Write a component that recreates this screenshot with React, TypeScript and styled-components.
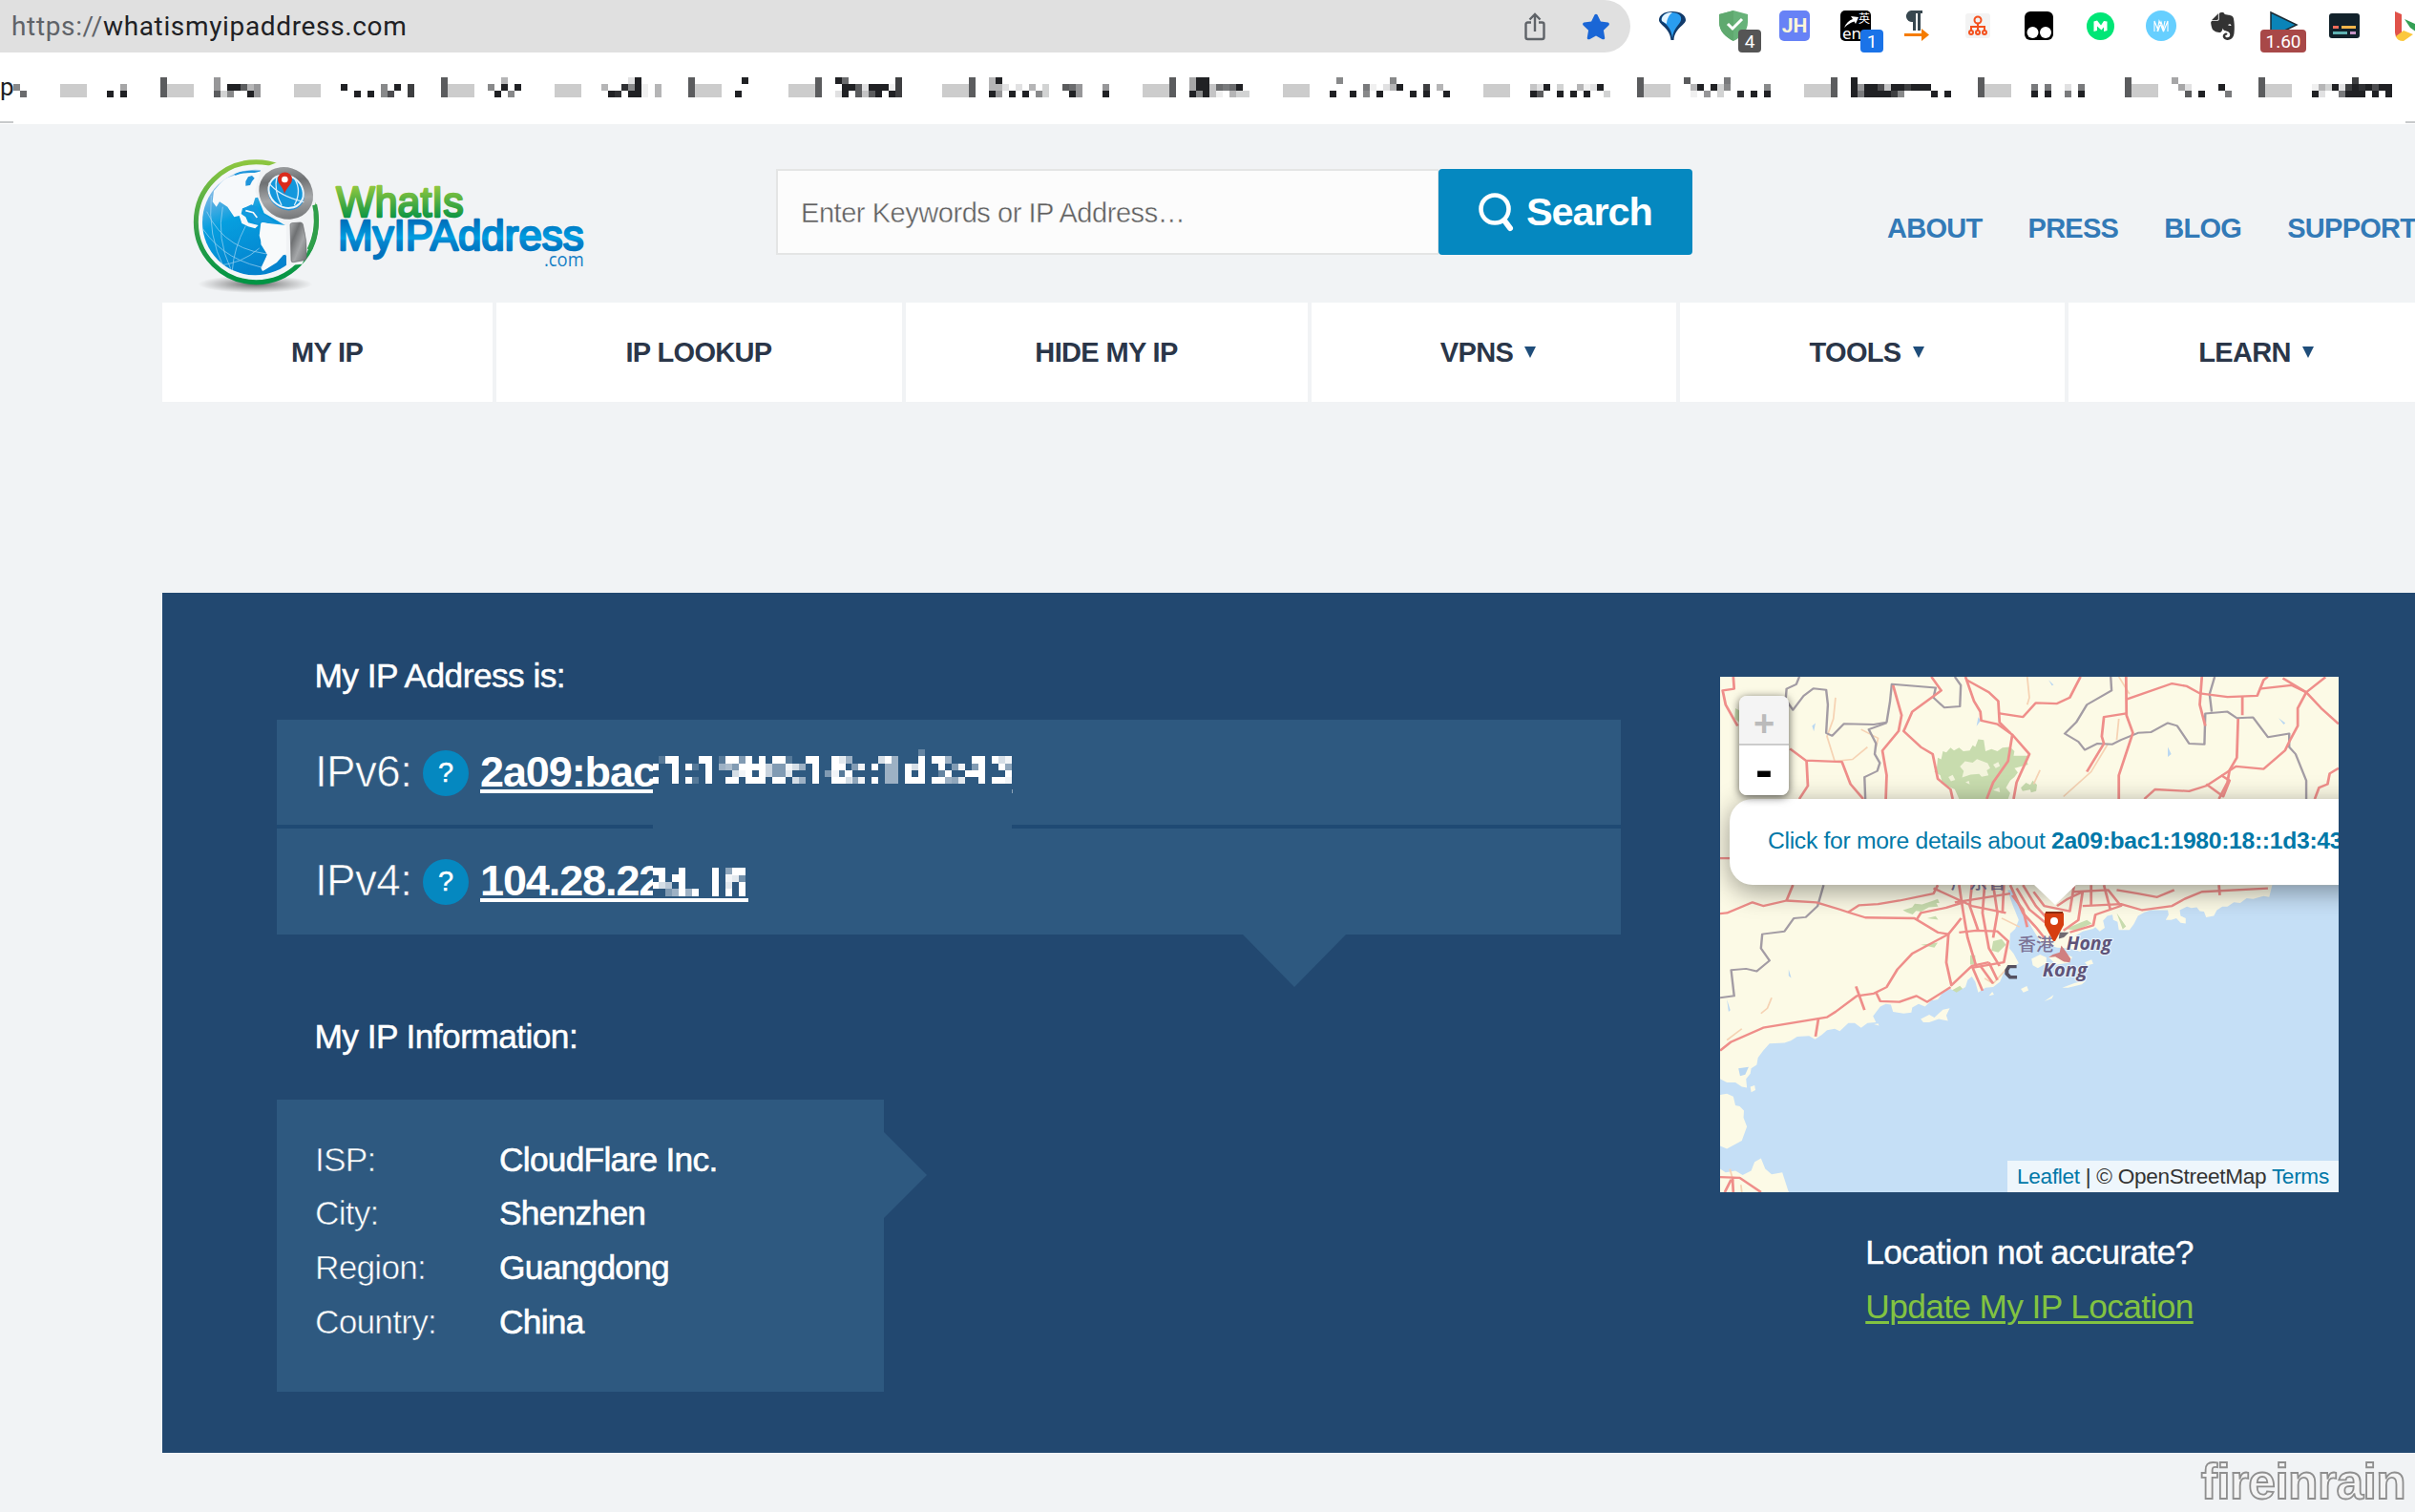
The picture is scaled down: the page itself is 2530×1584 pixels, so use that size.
import React from "react";
import styled, { createGlobalStyle } from "styled-components";
import { FaEvernote, FaStar } from "react-icons/fa";

const GlobalStyle = createGlobalStyle`
  *, *::before, *::after { box-sizing: border-box; }
  html, body { margin: 0; padding: 0; }
  body {
    width: 2530px;
    height: 1584px;
    overflow: hidden;
    background: #f1f3f5;
    font-family: "Liberation Sans", Arial, "Noto Sans CJK SC", sans-serif;
  }
`;

const Page = styled.div`
  position: relative;
  width: 2530px;
  height: 1584px;
  overflow: hidden;
`;

/* ---------- browser chrome ---------- */

const Toolbar = styled.div`
  display: flex;
  height: 55px;
  background: #fff;
`;

const Omnibox = styled.div`
  display: flex;
  flex: none;
  align-items: center;
  width: 1708px;
  height: 55px;
  padding: 0 4px 0 12px;
  background: #e0e0e0;
  border-radius: 0 28px 28px 0;
`;

const Url = styled.span`
  flex: 1;
  font: 400 28px/55px Roboto, "Noto Sans", sans-serif;
  letter-spacing: 0.65px;
  color: #202124;
`;

const Scheme = styled.span`
  color: #5f6368;
`;

const OmniIcon = styled.span`
  display: flex;
  justify-content: center;
  width: 64px;
  color: #1a66d6;
`;

const Extensions = styled.div`
  display: flex;
  flex: none;
  margin-left: 12px;
`;

const ExtSlot = styled.div`
  position: relative;
  display: flex;
  flex: none;
  align-items: center;
  justify-content: center;
  width: 64px;
  height: 54px;
`;

const ExtBadge = styled.span<{ $bg: string; $w: number; $left: number }>`
  position: absolute;
  top: 31px;
  left: ${(p) => p.$left}px;
  width: ${(p) => p.$w}px;
  height: 24px;
  border-radius: 4px;
  background: ${(p) => p.$bg};
  color: #fff;
  font: 400 19px/26px Roboto, sans-serif;
  text-align: center;
`;

const Tile = styled.span<{ $bg: string; $w: number; $h: number; $r: number }>`
  position: relative;
  display: flex;
  align-items: center;
  justify-content: center;
  width: ${(p) => p.$w}px;
  height: ${(p) => p.$h}px;
  border-radius: ${(p) => p.$r}px;
  background: ${(p) => p.$bg};
  overflow: hidden;
`;

const JhText = styled.span`
  color: #fdf6d8;
  font: 700 21px/32px Roboto, sans-serif;
`;

const EnText = styled.span`
  position: absolute;
  left: 2px;
  bottom: -1px;
  color: #fff;
  font: 400 17px/18px "Noto Sans", sans-serif;
`;

const YingText = styled.span`
  position: absolute;
  right: 1px;
  top: 1px;
  color: #fff;
  font: 400 12px/14px "Noto Sans CJK SC", sans-serif;
`;

const Bookmarks = styled.div`
  height: 75px;
  background: #fff;
  display: flex;
  align-items: flex-start;
  overflow: hidden;
`;

const BookmarkLetter = styled.span`
  width: 14px;
  height: 74px;
  padding-top: 18px;
  border-bottom: 2px solid #c8cacc;
  overflow: hidden;
  color: #202124;
  font: 400 26px/36px Roboto, sans-serif;
`;

const BookmarkSvg = styled.svg`
  display: block;
  flex: none;
`;

/* ---------- site header ---------- */

const Header = styled.header`
  display: flex;
  height: 187px;
  padding-left: 170px;
`;

const LogoSvg = styled.svg`
  flex: none;
  width: 460px;
  height: 170px;
  margin: 20px 0 0 10px;
`;

const SearchForm = styled.div`
  display: flex;
  flex: none;
  margin: 47px 0 0 173px;
  height: 90px;
`;

const SearchField = styled.div`
  width: 694px;
  padding-left: 24px;
  background: #fcfcfc;
  border: 2px solid #e4e5e5;
  border-right-width: 1px;
  font-size: 29px;
  letter-spacing: -0.45px;
  line-height: 88px;
  color: #606060;
  -webkit-text-stroke: 0.4px #fcfcfc;
`;

const SearchButton = styled.div`
  display: flex;
  align-items: center;
  width: 266px;
  padding-left: 42px;
  border-radius: 4px;
  background: #0588c0;
  color: #fff;
  font-size: 41.5px;
  font-weight: 700;
  letter-spacing: -1.1px;
`;

const SearchGlyph = styled.svg`
  margin-right: 13px;
`;

const TopLinks = styled.nav`
  display: flex;
  flex: none;
  gap: 48.2px;
  margin: 89px 0 0 204px;
  color: #337ab7;
  font-size: 29px;
  font-weight: 700;
  line-height: 40px;
  letter-spacing: -0.75px;
`;

const MainNav = styled.nav`
  display: flex;
  gap: 4px;
  height: 104px;
  margin-left: 170px;
`;

const NavItem = styled.div<{ $w: number; $menu: boolean }>`
  display: flex;
  flex: none;
  align-items: center;
  justify-content: center;
  gap: 12px;
  width: ${(p) => p.$w}px;
  padding-right: ${(p) => (p.$menu ? 12 : 1)}px;
  background: #fff;
  color: #2a3649;
  font-size: 29px;
  font-weight: 700;
  line-height: 104px;
  letter-spacing: -0.65px;
`;

const Caret = styled.i`
  border: 6px solid transparent;
  border-top: 12px solid #1f4d7a;
  border-bottom: 0;
`;

/* ---------- main panel ---------- */

const Panel = styled.main`
  display: flex;
  height: 901px;
  margin: 200px 0 0 170px;
  background: #224870;
  color: #fff;
`;

const LeftColumn = styled.section`
  flex: none;
  width: 1528px;
  padding: 67px 0 0 120px;
`;

const Heading = styled.h2<{ $mt?: number; $mb: number }>`
  margin: ${(p) => p.$mt ?? 0}px 0 ${(p) => p.$mb}px 39.500px;
  font-size: 35.3px;
  font-weight: 400;
  line-height: 40px;
  letter-spacing: -0.56px;
  -webkit-text-stroke: 0.5px #fff;
`;

const IpBox = styled.div`
  position: relative;
  display: flex;
  flex-direction: column;
  gap: 4px;
  background: #1f4a74;
  &::after {
    content: "";
    position: absolute;
    top: 100%;
    left: 1012px;
    border: 54px solid transparent;
    border-top: 55px solid #2e5980;
    border-bottom: 0;
  }
`;

const IpRow = styled.div<{ $h: number }>`
  display: flex;
  align-items: flex-start;
  height: ${(p) => p.$h}px;
  padding-left: 40px;
  background: #2e5980;
`;

const IpLabel = styled.span`
  width: 113px;
  font-size: 45.8px;
  line-height: 110px;
  letter-spacing: -0.6px;
  -webkit-text-stroke: 0.7px #2e5980;
`;

const Help = styled.span`
  width: 48px;
  height: 48px;
  margin: 32px 12px 0 0;
  border-radius: 50%;
  background: #0588c0;
  font-size: 29px;
  line-height: 47px;
  text-align: center;
  -webkit-text-stroke: 0.4px #fff;
`;

const IpValue = styled.a`
  width: 181px;
  overflow: hidden;
  white-space: nowrap;
  font-size: 45px;
  font-weight: 700;
  line-height: 110px;
  letter-spacing: -1.1px;
  text-decoration: underline;
  text-decoration-thickness: 4px;
  text-decoration-skip-ink: none;
  text-underline-offset: 3px;
`;

const IpMask = styled.svg`
  position: absolute;
  left: 394px;
  top: 20px;
`;

const InfoBox = styled.div`
  position: relative;
  width: 636px;
  height: 306px;
  padding: 34.5px 0 0 40px;
  background: #2e5980;
  &::after {
    content: "";
    position: absolute;
    left: 100%;
    top: 34px;
    border: 45px solid transparent;
    border-left: 45px solid #2e5980;
    border-right: 0;
  }
`;

const InfoRow = styled.div`
  display: flex;
  height: 56.8px;
  font-size: 35.3px;
  line-height: 56px;
`;

const InfoLabel = styled.span`
  width: 193px;
  letter-spacing: -0.8px;
  -webkit-text-stroke: 0.6px #2e5980;
`;

const InfoValue = styled.span`
  letter-spacing: -0.72px;
  -webkit-text-stroke: 0.6px #fff;
`;

const RightColumn = styled.section`
  flex: none;
  width: 648px;
  margin: 88px 0 0 104px;
  text-align: center;
`;

const MapFrame = styled.div`
  position: relative;
  width: 648px;
  height: 540px;
  margin-bottom: 34px;
  overflow: hidden;
  background: #fcfae6;
  text-align: left;
`;

const MapSvg = styled.svg`
  display: block;
  width: 648px;
  height: 540px;
`;

const ZoomControl = styled.div`
  position: absolute;
  left: 20px;
  top: 20px;
  width: 52px;
  border-radius: 8px;
  overflow: hidden;
  box-shadow: 0 2px 10px rgba(0, 0, 0, 0.65);
  text-align: center;
`;

const ZoomButton = styled.div<{ $off?: boolean }>`
  display: flex;
  align-items: center;
  justify-content: center;
  height: 52px;
  background: ${(p) => (p.$off ? "#f4f4f4" : "#fff")};
  border-bottom: ${(p) => (p.$off ? "2px solid #ccc" : "0")};
  color: ${(p) => (p.$off ? "#bbb" : "#000")};
  font: 700 ${(p) => (p.$off ? 38 : 54)}px/40px "Liberation Sans", sans-serif;
  padding: ${(p) => (p.$off ? "7px 0 0" : "0 0 3px")};
`;

const Popup = styled.div`
  position: absolute;
  left: 10px;
  top: 128px;
  width: 700px;
  height: 90px;
  padding-left: 40px;
  border-radius: 24px;
  background: #fff;
  box-shadow: 0 6px 28px rgba(0, 0, 0, 0.4);
  color: #0078a8;
  font-size: 24.7px;
  letter-spacing: -0.31px;
  line-height: 88px;
  white-space: nowrap;
`;

const PopupTip = styled.i`
  position: absolute;
  left: 328px;
  top: 217px;
  border: 23px solid transparent;
  border-top: 22px solid #fff;
  border-bottom: 0;
`;

const Pin = styled.svg`
  position: absolute;
  left: 340px;
  top: 246px;
`;

const Attribution = styled.div`
  position: absolute;
  right: 0;
  bottom: 0;
  width: 347px;
  height: 33px;
  background: rgba(255, 255, 255, 0.7);
  color: #333;
  font-size: 22.6px;
  letter-spacing: -0.3px;
  line-height: 33px;
  text-align: center;
  white-space: nowrap;
`;

const MapLink = styled.a`
  color: #0078a8;
`;

const LocationText = styled.div<{ $link?: boolean }>`
  font-size: 35.3px;
  line-height: 57px;
  letter-spacing: -0.62px;
  color: ${(p) => (p.$link ? "#82c341" : "#fff")};
  text-decoration: ${(p) => (p.$link ? "underline" : "none")};
  text-decoration-thickness: 3px;
  text-underline-offset: 3px;
  -webkit-text-stroke: ${(p) => (p.$link ? "0" : "0.4px #fff")};
`;

const Watermark = styled.div`
  position: absolute;
  right: 10px;
  bottom: 4px;
  font-size: 51.5px;
  font-weight: 700;
  line-height: 56px;
  letter-spacing: -0.6px;
  color: #f4f4f4;
  -webkit-text-stroke: 1.8px #8f8f8f;
`;

/* Bookmark bar blocks: "column:levels", three levels from top to bottom. */
const FOLDERS = [9, 25, 44, 67, 83, 104, 118, 141, 171, 192, 222, 246, 270, 297, 319, 339];
const CELLS = (
  "2:080 3:00a 16:00f 18:06f 24:bbb 32:77b 33:003 34:0f8 35:0f0 36:0b0 37:05f 38:077 " +
  "51:0f0 53:00f 55:00f 57:088 58:00c 59:0f0 61:0dd 66:bbb 73:080 74:00f 75:5f0 76:008 77:0f0 " +
  "90:050 91:00f 92:00e 93:0e0 94:28f 95:fff 96:011 98:055 103:bbb 110:00f 111:f00 122:bbb " +
  "125:f02 126:aff 127:0f0 128:0bb 129:024 130:0fb 131:0ff 132:0f0 133:01f 134:ddd 145:bbb " +
  "148:55f 149:f57 150:020 151:00f 152:020 153:00f 154:050 155:008 156:033 159:0b0 160:0af 161:077 165:07f " +
  "175:bbb 178:66f 179:ff8 180:fff 181:044 182:0a1 183:090 184:0a5 185:0f3 186:003 " +
  "199:00f 200:800 202:00f 204:098 205:010 206:00f 207:020 208:850 209:0f0 211:00f 213:0df 215:050 216:00f " +
  "229:04f 230:02b 231:0f0 233:03f 235:00f 236:050 237:01f 238:020 239:0f0 240:003 245:bbb " +
  "252:b00 253:051 254:0f0 255:007 256:0f0 257:033 258:980 260:00e 262:00f 264:08f 274:bbb " +
  "277:fff 278:079 279:0ff 280:0ff 281:0cf 282:04f 283:0fd 284:0f8 285:0d0 286:0f0 287:0f0 288:0f0 289:00f 291:00f " +
  "296:bbb 304:09f 306:09f 309:029 311:09f 318:bbb 325:600 326:060 327:02b 329:00f 332:0f0 333:009 338:bbb " +
  "346:01f 347:052 348:030 349:0f0 350:029 351:0df 352:dff 353:0ef 354:0f0 355:0cf 356:0f0 357:0ff"
)
  .split(" ")
  .map((c) => c.split(":"));

const V6_ROWS = [
  "000000000000000000000000000000000000000040000000000000",
  "03ff000ff03ff6f0f0ff300ff00fd80000cf8000f0ff8000ff0fce",
  "f00f0f30f0896ffffb66ec80f00ff06e0f0880fcf00f06e06f00f7",
  "000f0000f000cef0fb66d000f06e3f00000880f0f004f00fff000f",
  "f00f0f30f00ff0fff0ff0c80f00ffc7e0f0880fff0ff87d00f0ffe",
];
const V4_ROWS = ["ff00f0000f07ff", "0f0ff0000f0ed5", "fca0f0000f0d0f", "0068f8f00f0f0f"];

function IpMosaic() {
  const draw = (rows: string[], top: number, h: number) =>
    rows.flatMap((r, j) =>
      r.split("").map((v, i) => {
        const left = Math.max(0, -1 + 6.98 * i);
        return v === "0" ? null : (
          <rect
            key={`${top}-${i}-${j}`}
            x={left}
            y={top + j * h}
            width={6.98 * (i + 1) - 1 - left + 0.1}
            height={h + 0.1}
            fill="#fff"
            fillOpacity={parseInt(v, 16) / 15}
            shapeRendering="crispEdges"
          />
        );
      })
    );
  return (
    <IpMask width="378" height="176" viewBox="0 0 378 176">
      <rect width="376" height="159" fill="#2e5980" />
      {draw(V6_ROWS, 11, 7.25)}
      {draw(V4_ROWS, 135, 7.4)}
      <rect y="167" width="100" height="4" fill="#fff" />
      <rect x="376" y="53" width="1" height="4" fill="#8da4b8" />
    </IpMask>
  );
}

function BookmarkBlocks() {
  return (
    <BookmarkSvg width="2516" height="75" viewBox="14 55 2516 75">
      {FOLDERS.map((c) => (
        <rect key={c} x={c * 7} y="88" width="28" height="14" fill="#ccc" />
      ))}
      {CELLS.flatMap(([c, v]) =>
        v.split("").map((l, j) =>
          l === "0" ? null : (
            <rect key={c + j} x={Number(c) * 7} y={81 + 7 * j} width="7" height="7" fill="#202124" fillOpacity={parseInt(l, 16) / 15} />
          )
        )
      )}
      <rect x="2520" y="127" width="10" height="2" fill="#c8cacc" />
    </BookmarkSvg>
  );
}

function Logo() {
  return (
    <LogoSvg viewBox="0 0 1380 510">
      <defs>
        <linearGradient id="ring" x1="0" y1="0" x2="0" y2="1">
          <stop offset="0" stopColor="#8dc63f" />
          <stop offset="0.6" stopColor="#2f9e49" />
          <stop offset="1" stopColor="#009444" />
        </linearGradient>
        <linearGradient id="green" gradientUnits="userSpaceOnUse" x1="0" y1="138" x2="0" y2="236">
          <stop offset="0" stopColor="#8dc63f" />
          <stop offset="1" stopColor="#0a9444" />
        </linearGradient>
        <linearGradient id="blue" gradientUnits="userSpaceOnUse" x1="0" y1="245" x2="0" y2="345">
          <stop offset="0" stopColor="#0070bc" />
          <stop offset="0.55" stopColor="#00a0e2" />
          <stop offset="0.62" stopColor="#0586cf" />
          <stop offset="1" stopColor="#0072bd" />
        </linearGradient>
        <linearGradient id="sea" x1="0" y1="0" x2="0.4" y2="1">
          <stop offset="0" stopColor="#d4e8f8" />
          <stop offset="0.25" stopColor="#6fb4e4" />
          <stop offset="0.5" stopColor="#079fdf" />
          <stop offset="1" stopColor="#0583ce" />
        </linearGradient>
        <linearGradient id="steel" x1="0" y1="0" x2="1" y2="1">
          <stop offset="0" stopColor="#a9abad" />
          <stop offset="0.3" stopColor="#6f7173" />
          <stop offset="0.6" stopColor="#a5a7a9" />
          <stop offset="1" stopColor="#6b6d6f" />
        </linearGradient>
        <radialGradient id="shade">
          <stop offset="0" stopColor="#555" stopOpacity="0.9" />
          <stop offset="1" stopColor="#777" stopOpacity="0" />
        </radialGradient>
        <clipPath id="globe">
          <circle cx="262" cy="249" r="166" />
        </clipPath>
      </defs>
      <ellipse cx="262" cy="443" rx="180" ry="28" fill="url(#shade)" />
      <circle cx="265" cy="248" r="189" fill="#f4f6f8" stroke="url(#ring)" strokeWidth="15" />
      <circle cx="262" cy="249" r="166" fill="url(#sea)" />
      <g clipPath="url(#globe)">
        <path
          d="M132 150 L165 112 215 95 300 88 300 165 262 172 255 195 222 205 218 222 232 232 240 250 272 258 262 268 240 262 220 252 212 228 196 232 175 200 150 184 140 200 128 184Z"
          fill="#f6f9fb"
        />
        <path d="M280 250 L310 245 345 262 375 262 375 350 350 355 335 380 310 398 285 402 280 392 300 350 300 330 282 315 275 290Z" fill="#f6f9fb" />
        <path d="M232 120 l8 -14 12 -4 8 8 -8 10 -6 12 -14 2z M195 96 q40 -14 85 -8 l-20 5 q-35 -2 -60 8z" fill="#1f95db" />
        <path d="M222 206 l28 -13 18 8 8 18 25 12 20 18 35 2 -20 10 -48 -12 -25 6 -18 -22 -20 -8z" fill="#149ade" />
        <path d="M232 212 l24 6 12 16" stroke="#f6f9fb" strokeWidth="5" fill="none" />
        <g fill="none" stroke="#b5dcf4" strokeWidth="2.5" opacity="0.75">
          <path d="M124 165 Q112 290 165 395" />
          <path d="M160 200 Q140 300 185 395" />
          <path d="M232 260 Q195 330 190 400" />
          <path d="M110 215 Q170 345 330 350" />
          <path d="M98 270 Q170 375 310 395" />
          <path d="M275 330 Q220 380 140 385" />
        </g>
      </g>
      <path d="M345 55 L470 120 450 195 430 330 410 380 360 385 360 260 290 220 262 150 280 80Z" fill="#f1f3f5" />
      <path d="M449 194 Q466 264 432 335" fill="none" stroke="#2f9e49" strokeWidth="15" />
      <path d="M282 250 L360 258 358 352 340 375 300 400 285 395 300 350 280 318Z" fill="#f8fafb" />
      <path d="M350 352 L358 350 358 380 300 408 270 410 290 400 330 375Z" fill="#0583ce" />
      <ellipse cx="359" cy="157" rx="74" ry="65" transform="rotate(35 359 157)" fill="#2392d8" stroke="url(#steel)" strokeWidth="28" />
      <ellipse cx="359" cy="152" rx="57" ry="49" transform="rotate(35 359 152)" fill="#1397dc" stroke="#eaf4fb" strokeWidth="6" />
      <g fill="none" stroke="#d9eefb" strokeWidth="4">
        <path d="M305 125 Q335 165 415 185" />
        <path d="M330 105 Q320 150 345 195" />
        <path d="M385 110 Q410 150 385 195" />
      </g>
      <path d="M354 160 C350 135 333 130 333 113 A22 21 0 1 1 378 113 C378 130 360 138 354 160Z" fill="#da2a1c" />
      <circle cx="355" cy="114" r="10" fill="#fff" />
      <path d="M372 256 q0 -4 6 -5 l26 -2 q6 0 8 6 q14 50 11 105 q0 7 -7 8 l-34 6 q-7 1 -7 -6z" fill="url(#steel)" stroke="#6b6d6f" strokeWidth="2" />
      <g fontFamily="Liberation Sans" fontWeight="400" strokeWidth="7" strokeLinejoin="round">
        <text x="517" y="231" fontSize="131" fill="url(#green)" stroke="url(#green)" textLength="400" lengthAdjust="spacingAndGlyphs">
          WhatIs
        </text>
        <text x="522" y="337" fontSize="131" fill="url(#blue)" stroke="url(#blue)" textLength="773" lengthAdjust="spacingAndGlyphs">
          MyIPAddress
        </text>
      </g>
      <text x="1170" y="387" fontSize="60" fontFamily="Open Sans" fill="#1580c6" textLength="125" lengthAdjust="spacingAndGlyphs">
        .com
      </text>
    </LogoSvg>
  );
}

const BORDERS = [
  "M235 51 L228 72 205 85 203 115 220 145 245 105 268 84 298 88 302 130 298 210 312 218 340 184 410 186 440 180 448 120 452 72 555 82 550 110 575 138 612 135 614 75 600 51",
  "M440 182 L398 200 415 240 412 270 424 295 418 318 388 335 390 397",
  "M966 51 L968 90 910 130 885 180 858 212 890 235 905 258 935 240 970 242 990 230 1030 210 1060 208 1100 182 1122 190 1150 240 1186 242 1188 155 1240 150 1262 168 1300 166 1335 222 1385 212 1385 250 1400 270 1425 345 1425 397",
  "M1210 51 L1198 100 1203 150",
  "M292 641 L278 700 250 732 222 735 200 772 148 780 145 820 165 855 135 885 110 878 75 882 82 955 49 960",
];

const ROADS = [
  "M80 51 L82 85 55 90 62 130 90 190",
  "M455 75 L475 160 468 205 430 260 440 330 438 397",
  "M545 51 L568 90 500 150 480 205 520 250 548 270 560 340 590 370 595 397",
  "M625 51 L645 120 660 150 662 175 700 185 735 215 775 270 745 350 738 397",
  "M628 60 L680 95 702 120 705 180 730 210",
  "M895 51 L870 110 840 127 790 125 760 165 705 155",
  "M735 215 L725 290 690 350 675 397",
  "M1002 51 L1003 160 1018 210 985 330 985 397",
  "M1003 115 L1110 70 1145 78 1175 98 1240 108 1310 105 1325 60 1335 51",
  "M1003 155 L950 165 945 220 950 240 910 320",
  "M1180 51 L1175 130 1188 190",
  "M1275 108 L1275 160 M1265 170 L1262 280 1245 315 1240 350 1220 397",
  "M1315 85 L1390 75 1425 95 1470 52",
  "M1370 55 L1425 95 1460 140 1501 185",
  "M1425 95 L1405 140 1405 190 1385 235 1375 260 1325 312 1260 305 1190 360 1150 375 1070 370 1045 397",
  "M1190 355 L1230 390 1245 345 1225 330",
  "M1501 310 L1480 325 1475 355 1455 365 1445 397",
  "M49 565 L72 565",
  "M213 255 L250 288 335 292 355 355 385 397 M252 290 L255 360 235 397",
  "M49 722 L65 720 125 690 150 700 205 685 275 690 330 710 350 718 375 698 420 695 470 685 550 665 560 641",
  "M220 641 L205 685 M350 718 L390 733 505 735 560 775 585 780 605 750 615 735",
  "M510 740 L520 720 580 705 620 690",
  "M585 780 L500 835 465 880 440 930 410 948 370 955 320 1000 300 1015 150 1045 75 1085 49 1110",
  "M585 780 L580 860 592 925 640 870 680 860",
  "M368 928 L388 995 M415 945 L425 970 470 972 510 955 535 972 590 930",
  "M280 1018 L273 1070",
  "M610 641 L620 720 630 790 650 870 M640 641 L635 700 655 770 M670 641 L665 720 680 820 705 870 M690 641 L700 720 690 790 M715 641 L712 720",
  "M550 650 L640 700 720 720 M600 690 L730 665 M610 775 L650 770 700 772 725 800 715 860 640 875",
  "M640 870 L665 940 M660 870 L690 920 M680 860 L700 910",
  "M730 641 L760 720 790 760 810 790 M745 650 L775 710 830 765 M760 641 L790 700 820 740 M785 660 L810 700 870 715 880 641 M840 700 L865 680 900 660 890 740 855 770",
  "M735 670 L760 710 770 760 M880 660 L960 655 990 700 930 725 925 755 870 775 M900 700 L990 695 1040 712 1110 700 1140 680 1180 660 1335 650",
  "M920 641 L920 700 M950 641 L965 710 M980 655 L1030 665 1075 675 1115 655 M1220 641 L1222 670",
  "M49 1468 L95 1470 145 1511 M78 1468 L80 1511 M60 1511 L75 1475",
];

const MINOR = [
  "M320 110 L315 170 300 220 318 290 360 285 395 250",
  "M770 51 L775 110 770 130 M985 51 L1010 100 M980 230 L985 170",
  "M855 390 L920 320 960 240 M800 315 L785 355",
  "M170 960 L160 990 145 1005 M100 1048 L65 1080",
  "M380 200 L420 225 415 250",
  "M720 880 L690 920 670 905 M710 735 L752 760",
  "M72 1445 L80 1480 M98 1490 L100 1511",
];

function MapTiles() {
  return (
    <MapSvg viewBox="49 51 1452 1460" preserveAspectRatio="none">
      <rect x="49" y="51" width="1452" height="1460" fill="#fcfae6" />
      <g fill="#c8dcae">
        <path d="M560 280 L568 285 572 262 580 265 590 252 598 260 610 252 620 262 635 260 642 245 648 250 655 228 668 230 672 262 686 256 700 262 712 252 730 250 740 262 738 275 775 275 768 288 772 300 755 305 740 310 748 322 740 335 730 345 720 365 730 380 725 397 610 397 600 370 585 362 570 350 566 330 552 320 558 305Z" />
        <path d="M755 365 l12 -14 10 6 6 -12 10 12 -2 18 -12 4 -2 -8 -18 4z M478 712 l22 -8 6 -10 17 2 30 -12 8 18 -22 2 -18 12 -12 -2 -8 10 -14 -6z M540 690 l20 -10 4 12z M535 735 l20 -6 6 10z M860 765 l50 -25 12 10 -40 20z M690 800 l20 -6 10 16 -18 22 -16 -6z M592 940 l20 -14 10 14 -18 24 -12 -4z M520 810 l40 -6 -8 14z M636 840 l12 0 0 26 -12 0z M980 720 l22 38 -8 8z M85 140 l14 10 -4 30 -12 -10z" />
      </g>
      <g fill="#f3f4dc">
        <path d="M612 305 l12 -15 18 4 10 -10 25 12 6 14 -8 6 4 14 -16 4 -6 -8 -20 2 -20 8 4 -18z" />
        <path d="M585 335 l10 -6 6 14 -10 4z M690 300 l12 -8 4 12 -10 6z M690 372 l14 -8 2 14z M625 350 l8 -4 2 10z" />
      </g>
      <path
        d="M1501 641 L1345 641 1338 675 1325 672 1300 680 1285 678 1270 692 1255 690 1240 702 1228 702 1215 712 1208 728 1190 732 1185 716 1175 715 1168 704 1155 706 1145 702 1128 712 1130 728 1142 735 1142 750 1130 748 1120 735 1108 740 1095 740 1102 725 1100 712 1060 712 1045 718 1030 728 1020 752 1010 768 985 768 982 745 972 740 970 725 958 728 948 742 952 762 940 772 930 760 925 765 900 772 882 786 900 800 895 830 870 820 840 818 815 808 800 800 780 760 765 722 748 694 736 655 724 655 735 695 750 740 742 765 730 778 728 820 738 835 750 862 735 875 718 880 706 915 690 930 672 932 655 945 648 915 640 900 630 910 625 930 604 945 590 935 575 940 560 965 545 968 530 985 515 978 500 988 498 1002 480 1005 455 1000 450 980 438 978 425 985 408 1012 415 1030 395 1032 380 1045 365 1032 350 1032 330 1055 318 1048 300 1052 288 1065 272 1078 258 1068 230 1070 215 1082 200 1088 165 1090 150 1110 138 1130 135 1150 122 1160 120 1175 110 1190 112 1215 100 1212 85 1200 65 1200 49 1190 49 1235 65 1232 80 1240 85 1265 95 1268 105 1280 104 1300 112 1325 100 1365 65 1388 49 1380 49 1445 62 1455 85 1450 102 1462 122 1450 130 1425 145 1415 155 1445 170 1460 195 1455 210 1511 1501 1511Z"
        fill="#c5dff6"
      />
      <g fill="#fcfae6">
        <path d="M780 850 l20 -12 15 8 0 16 -20 14 -12 -8z M820 845 l30 -15 26 15 -8 16 -30 6z M520 1020 l20 -12 12 8 20 -22 16 -4 -8 20 4 16 -22 -6 -22 10 -14 0z M120 1212 l10 -4 2 14 -10 6z M905 860 l16 -8 4 12 -14 4z M852 932 l30 -14 26 -6 -10 10 -32 10z M755 935 l14 -8 4 12 -12 6z M680 955 l8 -12 4 8z M810 970 l22 -18 -4 10z M410 1035 l10 -2 2 6z" />
      </g>
      <path d="M850 812 l10 16 12 22 -2 10 -14 -2 -20 -14 -16 2 10 -8 16 -6z" fill="#d07f80" />
      <path d="M846 775 l22 0 -12 14 -12 4z" fill="#6f6a70" />
      <g fill="#b9d7f2">
        <path d="M265 190 l8 -8 -4 24z M1100 250 l8 20 -8 8z M65 965 l8 30 -4 5z M210 880 l6 24 -6 -6z M655 165 l6 10 -10 16z M92 1160 l24 -4 -8 22 -12 4z M1360 168 l16 14 -4 4z M820 60 l12 14 -4 2z" />
      </g>
      <g fill="none" strokeLinejoin="round">
        <g stroke="#f6d3b4" strokeWidth="4">
          {MINOR.map((d) => (
            <path key={d} d={d} />
          ))}
        </g>
        <g stroke="#a39ca4" strokeWidth="5.4">
          {BORDERS.map((d) => (
            <path key={d} d={d} />
          ))}
        </g>
        <g stroke="#ef8e8a" strokeWidth="6.2">
          {ROADS.map((d) => (
            <path key={d} d={d} />
          ))}
        </g>
      </g>
      <g fontFamily="Open Sans, Noto Sans" fontWeight="700" fontStyle="italic" fill="#5f5479" stroke="#fff" strokeWidth="6" strokeOpacity="0.6" paintOrder="stroke">
        <text x="862" y="824" fontSize="53" textLength="106" lengthAdjust="spacingAndGlyphs">
          Hong
        </text>
        <text x="806" y="900" fontSize="53" textLength="105" lengthAdjust="spacingAndGlyphs">
          Kong
        </text>
      </g>
      <g fontFamily="Noto Sans CJK TC" fontWeight="500" fill="#7d7496">
        <text x="748" y="826" fontSize="50" textLength="85" lengthAdjust="spacingAndGlyphs">
          香港
        </text>
        <text x="590" y="652" fontSize="50" textLength="130" lengthAdjust="spacingAndGlyphs">
          广东省
        </text>
      </g>
      <path d="M745 872 h-18 l-5 10 v10 l8 10 h16" fill="none" stroke="#55505f" strokeWidth="9" />
    </MapSvg>
  );
}

function ExtensionIcons() {
  return (
    <Extensions>
      <ExtSlot>
        <svg width="28" height="30" viewBox="0 0 28 30">
          <path d="M14 0 C23 0 28 4 28 9 C28 14 16.500 17 15.500 30 H12.500 C11.500 17 0 14 0 9 C0 4 5 0 14 0Z" fill="#123b6b" />
          <path d="M13 1 C21 1 24 5 23 9 C22 14 15 17 14 28 C13 17 7 13 3 10 C1 6 6 1 13 1Z" fill="#2a9df0" />
          <path d="M12 1 C5 2 2 6 3 10 L8 13 C8 9 10 4 14 1Z" fill="#e4f4ff" />
        </svg>
      </ExtSlot>
      <ExtSlot>
        <svg width="32" height="32" viewBox="0 0 32 32">
          <path d="M16 0 L31 4 V12 C31 22 24 28 16 32 C8 28 1 22 1 12 V4Z" fill="#67b279" />
          <path d="M16 0 V32 C8 28 1 22 1 12 V4Z" fill="#5fa96f" />
          <path d="M10 14 L15 19 25 9" fill="none" stroke="#fff" strokeWidth="3" />
        </svg>
        <ExtBadge $bg="#555" $w={24} $left={37}>4</ExtBadge>
      </ExtSlot>
      <ExtSlot>
        <Tile $bg="#6782f6" $w={32} $h={32} $r={5}>
          <JhText>JH</JhText>
        </Tile>
      </ExtSlot>
      <ExtSlot>
        <Tile $bg="#000" $w={32} $h={32} $r={5}>
          <svg width="32" height="32" viewBox="0 0 32 32">
            <path d="M4 18 Q7 11 13 9 L11 6 19 7 16 14 14.500 11.500 Q9 13 4 18Z" fill="#fff" />
          </svg>
          <EnText>en</EnText>
          <YingText>英</YingText>
        </Tile>
        <ExtBadge $bg="#1a73e8" $w={24} $left={37}>1</ExtBadge>
      </ExtSlot>
      <ExtSlot>
        <svg width="28" height="32" viewBox="0 0 28 32">
          <path d="M8 0 H20 V3 H18 V21 H15 V3 H13 V21 H10 V12 A6 6 0 0 1 8 0Z" fill="#37474f" />
          <path d="M1 24 H19 V19 L27 25.500 19 32 V27 H1Z" fill="#f57c00" />
        </svg>
      </ExtSlot>
      <ExtSlot>
        <Tile $bg="#f3f3f3" $w={26} $h={26} $r={3}>
          <svg width="22" height="22" viewBox="0 0 22 22" fill="none" stroke="#f4511e" strokeWidth="2">
            <circle cx="11" cy="5" r="3.500" />
            <path d="M11 9 V16 M4 16 V12 H18 V16" />
            <circle cx="4" cy="18" r="2" />
            <circle cx="11" cy="18" r="2" />
            <circle cx="18" cy="18" r="2" />
          </svg>
        </Tile>
      </ExtSlot>
      <ExtSlot>
        <Tile $bg="#000" $w={30} $h={30} $r={6}>
          <svg width="30" height="30" viewBox="0 0 30 30" fill="#fff">
            <circle cx="8.500" cy="22" r="6" />
            <circle cx="22" cy="22" r="6" />
          </svg>
        </Tile>
      </ExtSlot>
      <ExtSlot>
        <svg width="29" height="29" viewBox="0 0 29 29">
          <circle cx="14.500" cy="14.500" r="14.500" fill="#00e676" />
          <path d="M7.500 9.500 L11 8.500 15 13.500 18 9 21.500 9.500 V19 L18 20 V15.500 L15.500 18.500 11 14.500 V19 L7.500 20Z" fill="#fff" />
        </svg>
      </ExtSlot>
      <ExtSlot>
        <svg width="32" height="32" viewBox="0 0 32 32">
          <circle cx="16" cy="16" r="16" fill="#66cfff" />
          <path d="M9 22 V11 L13 21 16 12 19 21 23 11 V22 M12 22 L14 11 18 21 20 11" fill="none" stroke="#fff" strokeWidth="1.100" />
        </svg>
      </ExtSlot>
      <ExtSlot>
        <FaEvernote size={33} color="#333" />
      </ExtSlot>
      <ExtSlot>
        <svg width="32" height="32" viewBox="0 0 32 32">
          <path d="M3 2 L30 15 3 28Z" fill="#0a84b8" stroke="#1a2a33" strokeWidth="1.500" />
        </svg>
        <ExtBadge $bg="#a84848" $w={48} $left={8}>1.60</ExtBadge>
      </ExtSlot>
      <ExtSlot>
        <Tile $bg="#12222b" $w={32} $h={26} $r={3}>
          <svg width="32" height="26" viewBox="0 0 32 26">
            <rect x="4" y="13" width="6" height="3" fill="#ef6c5a" />
            <rect x="13" y="13" width="15" height="3" fill="#f3b54a" />
            <rect x="4" y="19" width="15" height="3" fill="#5fb3b3" />
            <rect x="22" y="19" width="6" height="3" fill="#c594c5" />
          </svg>
        </Tile>
      </ExtSlot>
      <ExtSlot>
        <svg width="24" height="31" viewBox="0 0 24 31">
          <path d="M1 0 L8 3 V22 L2 27 1 22Z" fill="#e0524a" />
          <path d="M2 26 L10 20 20 24 10 31 Q3 31 2 26Z" fill="#fbc83d" />
          <path d="M11 8 L24 14 V22 L17 17Z" fill="#34a055" />
        </svg>
      </ExtSlot>
    </Extensions>
  );
}

const NAV: [string, number, boolean][] = [
  ["MY IP", 346, false],
  ["IP LOOKUP", 425, false],
  ["HIDE MY IP", 421, false],
  ["VPNS", 382, true],
  ["TOOLS", 403, true],
  ["LEARN", 405, true],
];

const INFO = [
  ["ISP:", "CloudFlare Inc."],
  ["City:", "Shenzhen"],
  ["Region:", "Guangdong"],
  ["Country:", "China"],
];

export default function App() {
  return (
    <Page>
      <GlobalStyle />
      <Toolbar>
        <Omnibox>
          <Url>
            <Scheme>https://</Scheme>whatismyipaddress.com
          </Url>
          <OmniIcon>
            <svg width="22" height="30" viewBox="0 0 22 30" fill="none" stroke="#5f6368" strokeWidth="2.400">
              <path d="M7 10.500 H3.500 Q1.500 10.500 1.500 12.500 V26 Q1.500 28 3.500 28 H18.500 Q20.500 28 20.500 26 V12.500 Q20.500 10.500 18.500 10.500 H15 M11 20 V2 M5.500 7.500 L11 2 16.500 7.500" />
            </svg>
          </OmniIcon>
          <OmniIcon>
            <FaStar size={30} />
          </OmniIcon>
        </Omnibox>
        <ExtensionIcons />
      </Toolbar>
      <Bookmarks>
        <BookmarkLetter>p</BookmarkLetter>
        <BookmarkBlocks />
      </Bookmarks>

      <Header>
        <Logo />
        <SearchForm>
          <SearchField>Enter Keywords or IP Address…</SearchField>
          <SearchButton>
            <SearchGlyph width="37" height="42" viewBox="0 0 37 42" fill="none" stroke="#fff">
              <circle cx="17" cy="18" r="14.500" strokeWidth="4.600" />
              <path d="M27 30 L33 38" strokeWidth="6" strokeLinecap="round" />
            </SearchGlyph>
            Search
          </SearchButton>
        </SearchForm>
        <TopLinks>
          <span>ABOUT</span>
          <span>PRESS</span>
          <span>BLOG</span>
          <span>SUPPORT</span>
        </TopLinks>
      </Header>
      <MainNav>
        {NAV.map(([label, w, menu]) => (
          <NavItem key={label} $w={w} $menu={menu}>
            {label}
            {menu && <Caret />}
          </NavItem>
        ))}
      </MainNav>

      <Panel>
        <LeftColumn>
          <Heading $mb={26}>My IP Address is:</Heading>
          <IpBox>
            <IpRow $h={110}>
              <IpLabel>IPv6:</IpLabel>
              <Help>?</Help>
              <IpValue>2a09:bac1</IpValue>
            </IpRow>
            <IpRow $h={111}>
              <IpLabel>IPv4:</IpLabel>
              <Help>?</Help>
              <IpValue>104.28.221</IpValue>
            </IpRow>
            <IpMosaic />
          </IpBox>
          <Heading $mt={87} $mb={46}>
            My IP Information:
          </Heading>
          <InfoBox>
            {INFO.map(([k, v]) => (
              <InfoRow key={k}>
                <InfoLabel>{k}</InfoLabel>
                <InfoValue>{v}</InfoValue>
              </InfoRow>
            ))}
          </InfoBox>
        </LeftColumn>
        <RightColumn>
          <MapFrame>
            <MapTiles />
            <Popup>
              Click for more details about <b>2a09:bac1:1980:18::1d3:43</b>
            </Popup>
            <PopupTip />
            <Pin width="20" height="31" viewBox="0 0 20 31">
              <path d="M2 0 H18 L20 2 V14 L11 31 H9 L0 14 V2Z" fill="#d63e10" />
              <path d="M1 1 H19" stroke="#8d2a0c" strokeWidth="2" />
              <circle cx="10" cy="10" r="4" fill="#fff" />
            </Pin>
            <ZoomControl>
              <ZoomButton $off>+</ZoomButton>
              <ZoomButton>-</ZoomButton>
            </ZoomControl>
            <Attribution>
              <MapLink>Leaflet</MapLink> | © OpenStreetMap <MapLink>Terms</MapLink>
            </Attribution>
          </MapFrame>
          <LocationText>Location not accurate?</LocationText>
          <LocationText $link>Update My IP Location</LocationText>
        </RightColumn>
      </Panel>
      <Watermark>fireinrain</Watermark>
    </Page>
  );
}
